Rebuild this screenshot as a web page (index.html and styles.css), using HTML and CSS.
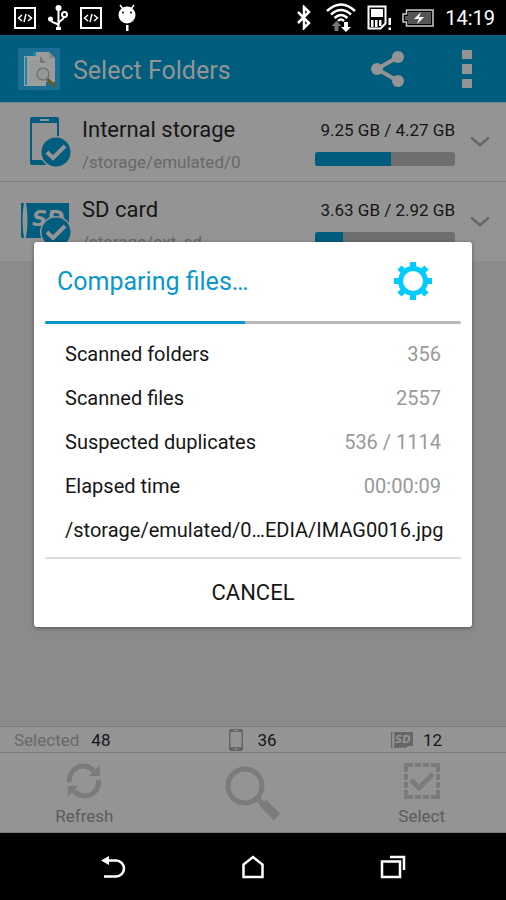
FILE: index.html
```html
<!DOCTYPE html>
<html lang="en">
<head>
<meta charset="utf-8">
<meta name="viewport" content="width=device-width, initial-scale=1">
<title>Select Folders</title>
<link rel="stylesheet" href="styles.css">
</head>
<body>
<svg class="sprite" aria-hidden="true">
  <symbol id="code" viewBox="0 0 22 22"><path d="M1 1h20v20H1z" fill="none" stroke="#fff" stroke-width="2"/><path d="M8 8l-3.500 3L8 14M14 8l3.500 3L14 14M12 7l-2 8" fill="none" stroke="#fff" stroke-width="1.500"/></symbol>
  <symbol id="chevron" viewBox="0 0 20 12"><path d="M1 1.500l9 7.500 9-7.500" fill="none" stroke="#666" stroke-width="2.500"/></symbol>
  <symbol id="check" viewBox="0 0 32 32"><circle cx="16" cy="16" r="16" fill="#949494"/><circle cx="16" cy="16" r="14.500" fill="#005d7e"/><path d="M7 16l6 6 12-12" fill="none" stroke="#949494" stroke-width="4"/></symbol>
</svg>
<div class="phone">
  <header class="status">
    <div class="status-left">
      <svg width="22" height="22"><use href="#code"/></svg>
      <svg width="20" height="26" viewBox="0 0 20 26"><g fill="none" stroke="#fff" stroke-width="2"><path d="M10.500 3v20M2.500 14c0 5 8 3 8 7M16 11c0 5-5.500 4-5.500 8"/><circle cx="16.500" cy="9.500" r="2.500"/></g><g fill="#fff"><circle cx="10.500" cy="3" r="3"/><circle cx="2.500" cy="14" r="2.500"/><path d="M8 22h5v3H8z"/></g></svg>
      <svg width="22" height="22"><use href="#code"/></svg>
      <svg class="droid" width="18" height="28" viewBox="0 0 18 28"><path d="M2 1l3 4M16 1l-3 4" stroke="#fff" stroke-width="1.500"/><circle cx="9" cy="11" r="8.500" fill="#fff"/><path d="M8 21h2.500v6H8z" fill="#fff"/><circle cx="5" cy="8.500" r="1"/><circle cx="13" cy="8.500" r="1"/></svg>
    </div>
    <div class="status-right">
      <svg width="14" height="25" viewBox="0 0 14 25"><path d="M1 7l11 11-5 5V2l5 5L1 18" fill="none" stroke="#fff" stroke-width="2.500"/></svg>
      <svg class="wifi" width="30" height="29" viewBox="0 0 30 29"><g fill="none" stroke="#fff" stroke-width="2.500"><path d="M1 8q14-13 28 0M5 11.500q10-9 20 0M8.500 15q6.500-6 13 0"/><path d="M12 18q3-3 6 0"/></g><path d="M10.500 18l5 5h-3v5h-4v-5h-3z" fill="#777"/><path d="M20 29l-5-5h3v-5h4v5h3z" fill="#fff"/></svg>
      <svg width="24" height="26" viewBox="0 0 24 26"><path d="M1.500 1.500h17v17l-5 5h-12z" fill="none" stroke="#fff" stroke-width="2"/><path d="M4 4h12v8H4zM4 15h2.500v7H4zM8 15h2.500v7H8zM12 15h2.500v6H12zM21.500 13H24v7h-2.500zM21.500 22.500H24V25h-2.500z" fill="#fff"/></svg>
      <svg width="32" height="18" viewBox="0 0 32 18"><path d="M4.500 1h26.500v16H4.500v-4H1V5h3.500z" fill="none" stroke="#ccc" stroke-width="1.500"/><path d="M6 3h23v12H6v-4H3V7h3z" fill="#555"/><path d="M19 3l-7 7h5l-2 5 7-7h-5z" fill="#fff"/></svg>
      <time class="clock">14:19</time>
    </div>
  </header>

  <div class="app">
    <div class="toolbar">
      <svg class="logo" width="42" height="42" viewBox="0 0 42 42"><rect width="42" height="42" rx="2" fill="#1c6f93"/><path d="M15 4h16l6 6v24H15z" fill="#9a9c9b"/><path d="M15 4h3v30h-3z" fill="#1688a8"/><path d="M31 4v6h6" fill="#858786"/><path d="M6 8h16l6 7v23H6z" fill="#9d9f9e"/><path d="M7 9h2v28H7z" fill="#1688a8"/><path d="M22 8v7h6" fill="#777"/><path d="M12 14h8M12 17h10M12 20h7M12 23h6M12 26h6M12 29h7M12 32h9M24 12h6M30 16h4M31 19h3" stroke="#919392" stroke-width="1"/><path d="M29 31l8 7" stroke="#6a5922" stroke-width="3"/><circle cx="25" cy="26" r="6" fill="#929998" stroke="#6d7476" stroke-width="1.500"/></svg>
      <h1>Select Folders</h1>
      <button class="icon-button share" aria-label="Share"><svg width="34" height="38" viewBox="0 0 34 38"><path d="M27 7L6 19l21 12" fill="none" stroke="#949494" stroke-width="4"/><g fill="#949494"><circle cx="27" cy="7" r="6"/><circle cx="6" cy="19" r="6"/><circle cx="27" cy="31" r="6"/></g></svg></button>
      <button class="icon-button" aria-label="More options"><svg width="10" height="40" viewBox="0 0 10 40"><path d="M0 1h10v9H0zM0 15h10v10H0zM0 30h10v9H0z" fill="#949494"/></svg></button>
    </div>

    <main class="storages">
      <section class="storage">
        <svg class="device" width="52" height="54" viewBox="0 0 52 54"><rect x="10" y="2" width="29" height="48" rx="2" fill="#005d7e"/><path d="M12 8h25v37H12z" fill="#949494"/><path d="M20 4h9v2h-9z" fill="#949494"/><use href="#check" x="20" y="21" width="32" height="32"/></svg>
        <div class="storage-name"><h2>Internal storage</h2><p>/storage/emulated/0</p></div>
        <div class="usage"><span>9.25 GB / 4.27 GB</span><div class="meter"><div class="meter-fill" style="width:54%"></div></div></div>
        <button class="icon-button" aria-label="Expand Internal storage"><svg width="20" height="12"><use href="#chevron"/></svg></button>
      </section>
      <section class="storage">
        <svg class="device" width="52" height="54" viewBox="0 0 52 54"><path d="M1 8h3q-3 17 0 35H3q-2 0-2-2z" fill="#005d7e"/><path d="M6 8h43v30l-5 5H6q3-17 0-35z" fill="#005d7e"/><text x="12" y="31" class="sd-label">SD</text><use href="#check" x="20" y="21" width="32" height="32"/></svg>
        <div class="storage-name"><h2>SD card</h2><p>/storage/ext_sd</p></div>
        <div class="usage"><span>3.63 GB / 2.92 GB</span><div class="meter"><div class="meter-fill" style="width:20%"></div></div></div>
        <button class="icon-button" aria-label="Expand SD card"><svg width="20" height="12"><use href="#chevron"/></svg></button>
      </section>
    </main>

    <div class="counts">
      <div class="count"><span class="muted">Selected</span><span>48</span></div>
      <div class="count center"><svg width="14" height="22" viewBox="0 0 14 22"><rect width="14" height="22" rx="2" fill="#666"/><path d="M1.500 3h11v15h-11z" fill="#949494"/><path d="M5 1h4v1H5z" fill="#949494"/><circle cx="7" cy="20" r="1" fill="#949494"/></svg><span>36</span></div>
      <div class="count end"><svg width="22" height="16" viewBox="0 0 22 16"><path d="M0 0h1.500q-1 8 0 16H0zM3 0h19v14h-5l-2 2h-2l-1-1-1 1h-1l-1-1-1 1H3q1-8 0-16z" fill="#666"/><text x="4" y="11" class="sd-small">SD</text></svg><span>12</span></div>
    </div>

    <footer class="actions">
      <button class="action"><svg width="36" height="36" viewBox="0 0 36 36"><g fill="none" stroke="#7b7b7b" stroke-width="5"><path d="M3.500 19A14 14 0 0 1 28 8"/><path d="M32.500 17A14 14 0 0 1 8 28"/></g><path d="M34 2v11H23zM2 34V23h10z" fill="#7b7b7b"/></svg><span>Refresh</span></button>
      <button class="action" aria-label="Search"><svg width="56" height="56" viewBox="0 0 56 56"><circle cx="20" cy="20" r="17" fill="none" stroke="#7b7b7b" stroke-width="5"/><path d="M31 32l8 7" stroke="#7b7b7b" stroke-width="5"/><path d="M38 37l14 14" stroke="#7b7b7b" stroke-width="9"/></svg></button>
      <button class="action"><svg width="36" height="36" viewBox="0 0 36 36"><path d="M9 2H2v7M27 2h7v7M34 27v7h-7M9 34H2v-7M11 2h6M19 2h6M11 34h6M19 34h6M2 11v6M2 19v6M34 11v6M34 19v6" fill="none" stroke="#7b7b7b" stroke-width="4"/><path d="M7 17l8 8 14-14" fill="none" stroke="#7b7b7b" stroke-width="5"/></svg><span>Select</span></button>
    </footer>

    <div class="overlay">
      <div class="dialog" role="dialog" aria-labelledby="dialog-title">
        <div class="dialog-head">
          <h2 id="dialog-title">Comparing files…</h2>
          <svg width="40" height="40" viewBox="0 0 40 40"><g fill="none" stroke="#0cf"><circle cx="20" cy="20" r="12.500" stroke-width="5"/><path d="M20 1v7M20 32v7M1 20h7M32 20h7M6.500 6.500l5 5M28.500 28.500l5 5M33.500 6.500l-5 5M11.500 28.500l-5 5" stroke-width="6"/></g></svg>
        </div>
        <div class="progress" role="progressbar" aria-labelledby="dialog-title"><div class="progress-fill" style="width:48%"></div></div>
        <dl class="stats">
          <div><dt>Scanned folders</dt><dd>356</dd></div>
          <div><dt>Scanned files</dt><dd>2557</dd></div>
          <div><dt>Suspected duplicates</dt><dd>536 / 1114</dd></div>
          <div><dt>Elapsed time</dt><dd>00:00:09</dd></div>
        </dl>
        <p class="current-file">/storage/emulated/0…EDIA/IMAG0016.jpg</p>
        <button class="cancel">CANCEL</button>
      </div>
    </div>
  </div>

  <nav class="nav">
    <button class="icon-button" aria-label="Back"><svg width="26" height="24" viewBox="0 0 26 24"><path d="M6 5.500h10a8 8 0 0 1 0 16H4" fill="none" stroke="#fff" stroke-width="2.500"/><path d="M1 5.500L9 1v9z" fill="#fff"/></svg></button>
    <button class="icon-button" aria-label="Home"><svg width="24" height="24" viewBox="0 0 24 24"><path d="M2.500 22V9.500L12 2l9.500 7.500V22z" fill="none" stroke="#fff" stroke-width="2.500"/></svg></button>
    <button class="icon-button" aria-label="Recent apps"><svg width="26" height="24" viewBox="0 0 26 24"><path d="M2 6.500h18V22H2zM10 2h14v13" fill="none" stroke="#fff" stroke-width="2.500"/></svg></button>
  </nav>
</div>
</body>
</html>
```
FILE: styles.css
```css
* { box-sizing: border-box; }
body { margin: 0; background: #000; color: #161616; font-family: Roboto, "Liberation Sans", sans-serif; font-size: 17px; }
h1, h2, p, dl, dd { margin: 0; font-weight: 400; }
svg { display: block; flex: none; }
button { border: 0; padding: 0; background: none; color: inherit; font: inherit; }
.sprite { position: absolute; width: 0; height: 0; }
.phone { display: flex; flex-direction: column; min-height: 100vh; }

.status { display: flex; justify-content: space-between; align-items: center; height: 35px; padding: 0 11px 0 14px; color: #fff; }
.status-left, .status-right { display: flex; align-items: center; }
.status-left { gap: 12px; }
.status-right { gap: 11px; }
.wifi { margin-left: 4px; }
.droid { margin-left: 4px; }
.clock { font-size: 20px; }

.app { position: relative; display: flex; flex: 1; flex-direction: column; background: #8b8b8b; }
.toolbar { display: flex; align-items: center; height: 68px; padding: 0 34px 0 18px; border-bottom: 1px solid #708a94; background: #005d7e; color: #949494; }
.toolbar h1 { flex: 1; margin-left: 13px; padding-top: 3px; font-size: 25px; }
.icon-button { display: grid; place-items: center; }
.share { margin-right: 57px; }

.storages { flex: 1; }
.storage { display: flex; align-items: center; height: 78px; padding: 0 16px 0 20px; background: #949494; }
.storage + .storage { height: 80px; border-top: 1px solid #7c7c7c; }
.storage-name { flex: 1; margin-left: 10px; padding-top: 8px; }
.storage-name h2 { font-size: 22px; line-height: 32px; }
.storage-name p { color: #686868; line-height: 32px; }
.usage { width: 140px; margin-right: 15px; padding-top: 2px; text-align: right; white-space: nowrap; }
.usage span { line-height: 32px; }
.meter { height: 14px; margin: 6px 0; overflow: hidden; border-radius: 3px; background: #6f6f6f; }
.meter-fill { height: 100%; background: #005d7e; }
.sd-label { fill: #949494; font: italic 700 21px "DejaVu Sans", sans-serif; }
.sd-small { fill: #949494; font: italic 700 10px "DejaVu Sans", sans-serif; }

.counts { display: grid; grid-template-columns: repeat(3, 1fr); height: 27px; padding: 0 14px; border-top: 1px solid #7c7c7c; border-bottom: 1px solid #7c7c7c; background: #949494; }
.count { display: flex; align-items: center; gap: 12px; }
.center { justify-content: center; gap: 14px; }
.end { justify-content: flex-end; gap: 10px; padding-right: 50px; }
.muted { color: #686868; }

.actions { display: grid; grid-template-columns: repeat(3, 1fr); height: 80px; border-bottom: 1px solid #7c7c7c; background: #949494; }
.action { display: flex; flex-direction: column; align-items: center; justify-content: center; gap: 7px; padding-top: 3px; color: #5b5b5b; }

.overlay { position: absolute; inset: 0; display: grid; grid-template-columns: minmax(0, 1fr); align-items: center; padding: 0 34px; }
.dialog { padding: 0 11px; border-radius: 3px; background: #fff; box-shadow: 0 1px 4px #0006; }
.dialog-head { display: flex; align-items: center; justify-content: space-between; height: 79px; padding: 0 28px 0 12px; color: #0a98cc; }
.dialog-head h2 { font-size: 25px; }
.progress { height: 3px; overflow: hidden; border-radius: 2px; background: #b8b8b8; }
.progress-fill { height: 100%; background: #0a98cc; }
.stats { padding: 8px 20px 0; font-size: 20px; }
.stats div { display: flex; align-items: center; justify-content: space-between; height: 44px; }
.stats dd { color: #999; }
.current-file { height: 51px; padding: 0 20px; border-bottom: 2px solid #ddd; font-size: 20px; line-height: 44px; white-space: nowrap; }
.cancel { display: block; width: 100%; height: 68px; font-size: 22px; }

.nav { display: flex; align-items: center; justify-content: center; gap: 115px; height: 67px; color: #fff; }
```
